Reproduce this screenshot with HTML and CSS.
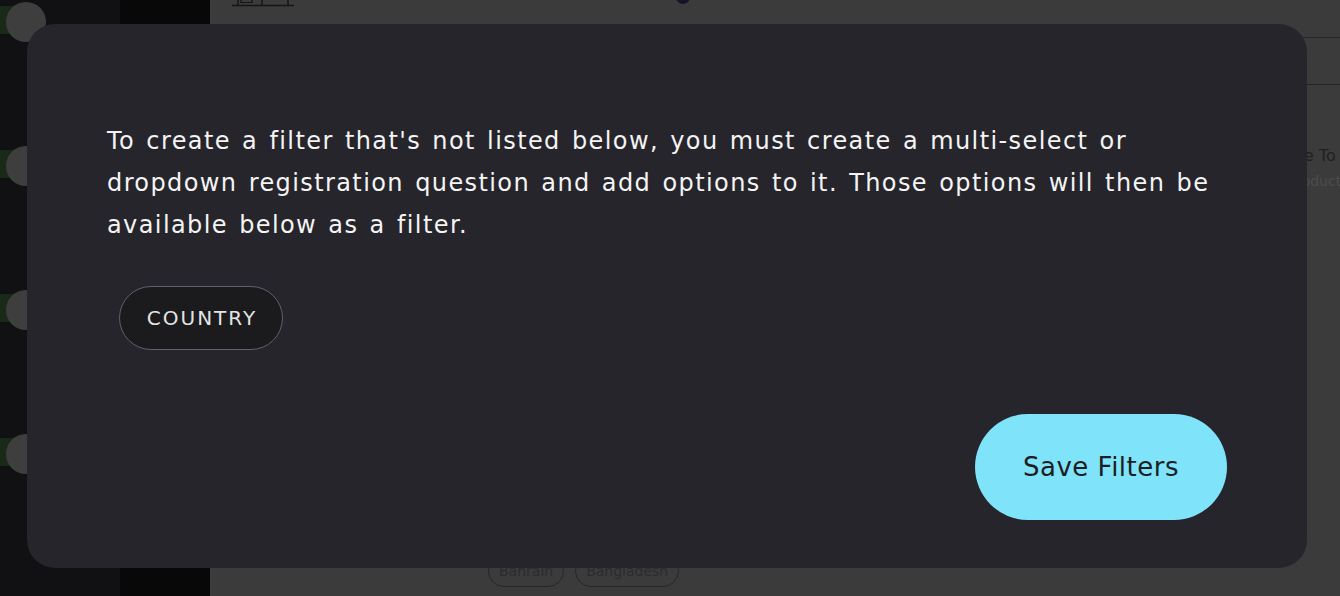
FILE: index.html
```html
<!DOCTYPE html>
<html lang="en">
<head>
<meta charset="utf-8">
<title>Filters</title>
<link rel="stylesheet" href="styles.css">
</head>
<body>
<div class="app">
  <aside class="sidebar">
    <div class="side-col">
      <div class="toggle-row"><span class="track"></span><span class="knob"></span></div>
      <div class="toggle-row"><span class="track"></span><span class="knob"></span></div>
      <div class="toggle-row"><span class="track"></span><span class="knob"></span></div>
      <div class="toggle-row"><span class="track"></span><span class="knob"></span></div>
    </div>
    <div class="side-col2"></div>
  </aside>
  <main class="main">
    <header class="topbar">
      <svg class="top-icon" width="64" height="8" viewBox="0 0 64 8">
        <path d="M6 0 V5 M30 0 V5 M56 0 V5 M0 5.5 H62" stroke="#151515" stroke-width="1.4" fill="none"/>
        <path d="M9 0 V2.5 H20 V0" stroke="#151515" stroke-width="1.2" fill="none"/>
      </svg>
      <span class="top-dot"></span>
    </header>
    <div class="content">
      <div class="right-panel">
        <div class="rp-line"></div>
        <div class="rp-gap"></div>
        <div class="rp-line"></div>
        <div class="rp-title">Type To</div>
        <div class="rp-sub">Product</div>
      </div>
      <div class="chips-bottom">
        <span class="bchip">Bahrain</span>
        <span class="bchip">Bangladesh</span>
      </div>
    </div>
  </main>
</div>

<div class="modal">
  <p class="modal-text">To create a filter that's not listed below, you must create a multi-select or dropdown registration question and add options to it. Those options will then be available below as a filter.</p>
  <div class="filter-list">
    <button class="filter-chip">COUNTRY</button>
  </div>
  <div class="modal-actions">
    <button class="save-btn">Save Filters</button>
  </div>
</div>
</body>
</html>
```
FILE: styles.css
```css
* { box-sizing: border-box; }
html, body { margin: 0; padding: 0; height: 100%; }
body {
  font-family: "DejaVu Sans", "Open Sans", sans-serif;
  background: #3b3b3b;
  overflow: hidden;
}
.app {
  display: flex;
  height: 596px;
}
.sidebar {
  display: flex;
  width: 210px;
  flex: none;
}
.side-col {
  width: 120px;
  background: #111113;
  padding-top: 2px;
}
.side-col2 {
  width: 90px;
  background: #080808;
}
.toggle-row {
  position: relative;
  height: 144px;
}
.track {
  position: absolute;
  left: -20px;
  top: 4px;
  width: 60px;
  height: 28px;
  border-radius: 14px;
  background: #1a2a18;
}
.knob {
  position: absolute;
  left: 6px;
  top: 0;
  width: 40px;
  height: 40px;
  border-radius: 50%;
  background: #3e3e3e;
}
.main {
  flex: 1;
  display: flex;
  flex-direction: column;
  background: #3b3b3b;
}
.topbar {
  position: relative;
  height: 30px;
  padding-left: 22px;
}
.top-icon { display: block; }
.top-dot {
  position: absolute;
  left: 466px;
  top: -10px;
  width: 14px;
  height: 14px;
  border-radius: 50%;
  background: #17132a;
}
.content {
  position: relative;
  flex: 1;
}
.right-panel {
  position: absolute;
  right: 0;
  top: 7px;
  width: 60px;
}
.rp-line { height: 1px; background: #262626; }
.rp-gap { height: 46px; }
.rp-title {
  margin-top: 61px;
  margin-left: -3px;
  font-size: 16px;
  color: #1f1f1f;
  white-space: nowrap;
}
.rp-sub {
  margin-top: 8px;
  margin-left: 8px;
  font-size: 14px;
  color: #4c4c4c;
  white-space: nowrap;
}
.chips-bottom {
  position: absolute;
  left: 278px;
  top: 525px;
  display: flex;
  gap: 11px;
}
.bchip {
  display: inline-block;
  height: 32px;
  line-height: 30px;
  padding: 0 10px;
  border: 1.5px solid #262626;
  border-radius: 16px;
  font-size: 14px;
  color: #2b2b2b;
}

.modal {
  position: absolute;
  left: 27px;
  top: 24px;
  width: 1280px;
  height: 544px;
  border-radius: 28px;
  background: #26252b;
  padding: 96px 80px 48px 80px;
  display: flex;
  flex-direction: column;
}
.modal-text {
  margin: 0 -20px 0 0;
  font-size: 24px;
  line-height: 42px;
  letter-spacing: 1.4px;
  word-spacing: 2.2px;
  color: #f4f4f4;
}
.filter-list {
  margin-top: 40px;
  padding-left: 12px;
  display: flex;
}
.filter-chip {
  height: 64px;
  width: 164px;
  padding: 0;
  border: 1.5px solid #625f70;
  border-radius: 32px;
  background: #1b1b1e;
  color: #e4e4e4;
  font-family: inherit;
  font-size: 20px;
  letter-spacing: 2px;
  text-indent: 2px;
  cursor: pointer;
}
.modal-actions {
  margin-top: auto;
  display: flex;
  justify-content: flex-end;
}
.save-btn {
  width: 252px;
  height: 106px;
  padding: 0;
  border: none;
  border-radius: 53px;
  background: #7fe3fa;
  color: #1d1e22;
  font-family: inherit;
  font-size: 26px;
  letter-spacing: 0.5px;
  cursor: pointer;
}
```
